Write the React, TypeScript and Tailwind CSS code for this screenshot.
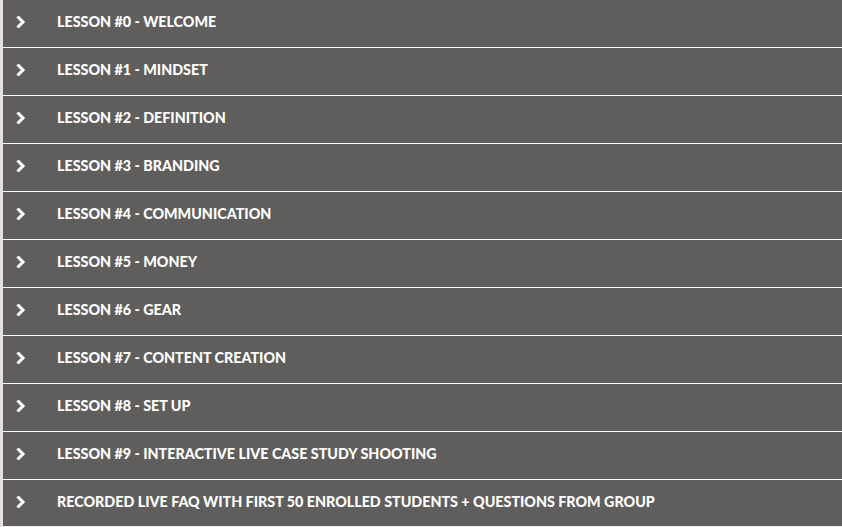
import React from "react";

const items = [
  "LESSON #0 - WELCOME",
  "LESSON #1 - MINDSET",
  "LESSON #2 - DEFINITION",
  "LESSON #3 - BRANDING",
  "LESSON #4 - COMMUNICATION",
  "LESSON #5 - MONEY",
  "LESSON #6 - GEAR",
  "LESSON #7 - CONTENT CREATION",
  "LESSON #8 - SET UP",
  "LESSON #9 - INTERACTIVE LIVE CASE STUDY SHOOTING",
  "RECORDED LIVE FAQ WITH FIRST 50 ENROLLED STUDENTS + QUESTIONS FROM GROUP",
];

function Chevron() {
  return (
    <svg width="10" height="12" viewBox="0 0 10 12" className="shrink-0">
      <polyline points="2.5,1.5 7,6 2.5,10.5" fill="none" stroke="#ffffff" strokeWidth="3" strokeLinecap="square" strokeLinejoin="miter" />
    </svg>
  );
}

export default function App() {
  return (
    <div className="w-[842px] h-[527px] bg-[#e4e0df] pl-[3px] overflow-hidden">
      <div className="flex flex-col">
        {items.map((t, i) => (
          <div
            key={i}
            className={
              (i === items.length - 1 ? "h-[47px] border-[#f2f0ef] " : "h-[48px] border-white ") +
              "flex items-center bg-[#5f5e5c] border-b shrink-0"
            }
          >
            <div className="w-[54px] flex items-center pl-[13px] pb-[3px]">
              <Chevron />
            </div>
            <span
              className="text-white text-[14.3px] font-black pb-[3px]"
              style={{ fontFamily: "Lato, 'Liberation Sans', sans-serif" }}
            >
              {t}
            </span>
          </div>
        ))}
      </div>
    </div>
  );
}
